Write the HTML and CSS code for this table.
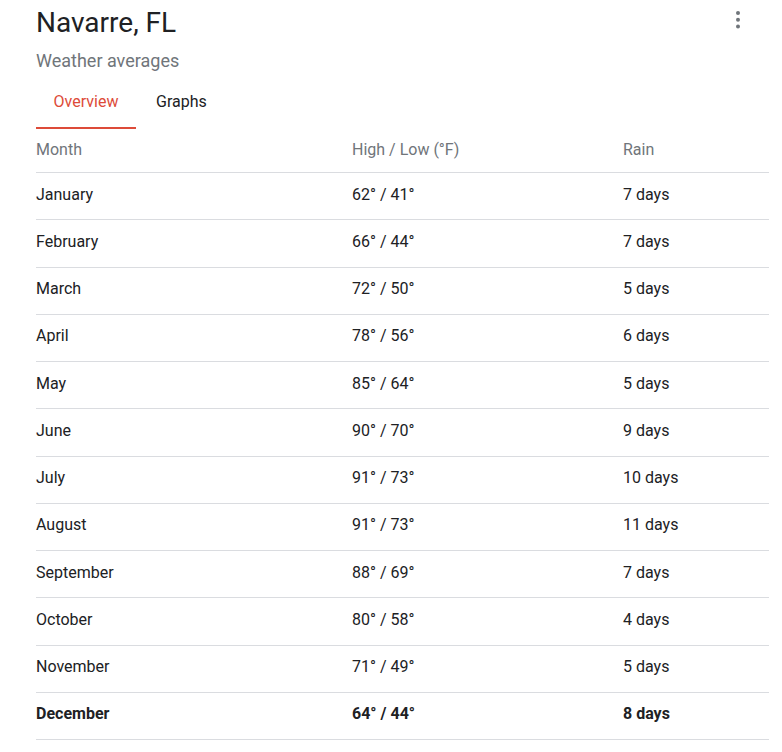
FILE: index.html
```html
<!DOCTYPE html>
<html lang="en">
<head>
<meta charset="utf-8">
<title>Navarre, FL weather averages</title>
<link rel="stylesheet" href="styles.css">
</head>
<body>
<div class="card">
  <div class="head">
    <div class="titles">
      <h1 class="title">Navarre, FL</h1>
      <div class="subtitle">Weather averages</div>
    </div>
    <button class="menu" aria-label="More options">
      <svg width="4" height="18" viewBox="0 0 4 18"><circle cx="2" cy="2" r="2"/><circle cx="2" cy="8.7" r="2"/><circle cx="2" cy="15.4" r="2"/></svg>
    </button>
  </div>
  <div class="tabs">
    <div class="tab active">Overview</div>
    <div class="tab">Graphs</div>
  </div>
  <div class="table">
    <div class="row th"><div>Month</div><div>High / Low (°F)</div><div>Rain</div></div>
    <div class="row"><div>January</div><div>62° / 41°</div><div>7 days</div></div>
    <div class="row"><div>February</div><div>66° / 44°</div><div>7 days</div></div>
    <div class="row"><div>March</div><div>72° / 50°</div><div>5 days</div></div>
    <div class="row"><div>April</div><div>78° / 56°</div><div>6 days</div></div>
    <div class="row"><div>May</div><div>85° / 64°</div><div>5 days</div></div>
    <div class="row"><div>June</div><div>90° / 70°</div><div>9 days</div></div>
    <div class="row"><div>July</div><div>91° / 73°</div><div>10 days</div></div>
    <div class="row"><div>August</div><div>91° / 73°</div><div>11 days</div></div>
    <div class="row"><div>September</div><div>88° / 69°</div><div>7 days</div></div>
    <div class="row"><div>October</div><div>80° / 58°</div><div>4 days</div></div>
    <div class="row"><div>November</div><div>71° / 49°</div><div>5 days</div></div>
    <div class="row current"><div>December</div><div>64° / 44°</div><div>8 days</div></div>
  </div>
</div>
</body>
</html>
```
FILE: styles.css
```css
html, body {
  margin: 0;
  padding: 0;
  background: #ffffff;
}
body {
  font-family: Roboto, "Liberation Sans", Arial, sans-serif;
  color: #202124;
}
.card {
  padding: 0 13px 0 36px;
}
.head {
  display: flex;
  justify-content: space-between;
  align-items: flex-start;
}
.title {
  margin: 0;
  padding-top: 6px;
  font-size: 28px;
  font-weight: 400;
  line-height: 34px;
  color: #202124;
}
.subtitle {
  font-size: 18px;
  line-height: 22px;
  margin-top: 10px;
  color: #70757a;
}
.menu {
  border: 0;
  background: none;
  padding: 0;
  margin: 11px 29px 0 0;
  width: 4px;
  height: 18px;
  fill: #70757a;
  display: flex;
}
.tabs {
  display: flex;
  margin-top: 16px;
  height: 41px;
}
.tab {
  padding: 4px 18px 0 20px;
  font-size: 16px;
  line-height: 20px;
  color: #202124;
  box-sizing: border-box;
}
.tab.active {
  width: 100px;
  padding: 4px 0 0;
  text-align: center;
  color: #dd4b39;
  border-bottom: 2px solid #dd4b39;
}
.table {
  display: flex;
  flex-direction: column;
}
.row {
  display: grid;
  grid-template-columns: 316px 271px 1fr;
  box-sizing: border-box;
  height: 47.25px;
  align-items: center;
  border-bottom: 1px solid #dadce0;
  font-size: 16px;
  color: #202124;
}
.row > div {
  padding-bottom: 4px;
}
.row.th {
  height: 44px;
  color: #70757a;
}
.row.th > div {
  padding-bottom: 2px;
}
.row.current {
  font-weight: 700;
}
```
